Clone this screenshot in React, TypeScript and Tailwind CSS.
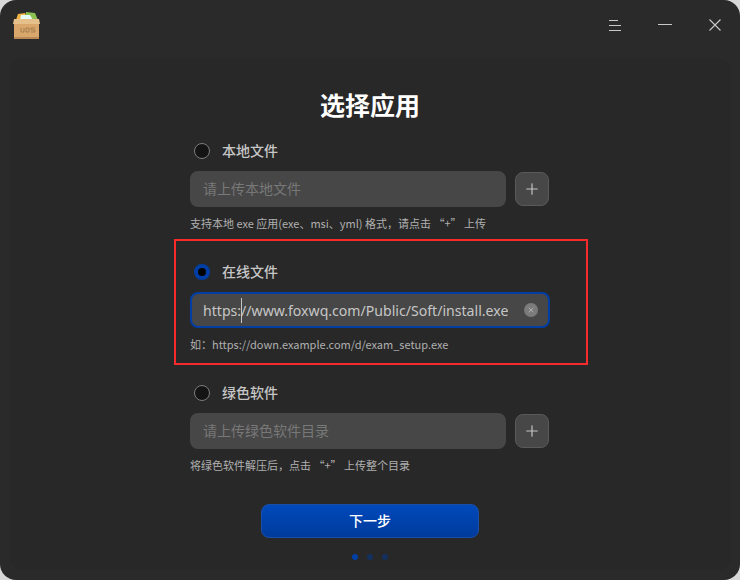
import { X, Plus } from "lucide-react";

const font = "font-['Noto_Sans','Noto_Sans_CJK_SC',sans-serif]";

function Radio({ checked }: { checked?: boolean }) {
  if (checked) {
    return <span className="w-4 h-4 rounded-full border-[4px] border-[#003ea6] bg-black" />;
  }
  return <span className="w-4 h-4 rounded-full border border-[#7d7d7d] bg-[#141414]" />;
}

function Option({ label, checked }: { label: string; checked?: boolean }) {
  return (
    <div className="flex items-center gap-3 pl-1 h-5 text-sm text-[#c6c6c6] font-medium leading-5">
      <Radio checked={checked} />
      <span>{label}</span>
    </div>
  );
}

function UploadField({ placeholder }: { placeholder: string }) {
  return (
    <div className="flex items-center gap-[9px] h-9">
      <div className="w-[316px] h-9 rounded-lg bg-[#474747] pl-[13px] flex items-center text-sm text-[#787878]">
        {placeholder}
      </div>
      <button className="w-[34px] h-[34px] rounded-lg bg-[#474747] border border-[#5a5a5a] flex items-center justify-center text-[#c4c4c4]">
        <Plus size={18} strokeWidth={1.6} />
      </button>
    </div>
  );
}

function Hint({ children }: { children: string }) {
  return (
    <p className="text-[11px] leading-4 font-normal text-[#b0b0b0] font-['Noto_Sans_CJK_SC','Noto_Sans',sans-serif]">
      {children}
    </p>
  );
}

function AppIcon() {
  return (
    <svg width="30" height="28" viewBox="0 0 30 28">
      <path d="M5 9 L7 3 L14 2 L17 9Z" fill="#f2b544" />
      <path d="M14 8 L15 1 L24 2 L27 9Z" fill="#8cc152" />
      <path d="M9 9 L10 4 L19 4 L22 9Z" fill="#e6fbf6" />
      <path d="M3 8 H28 L29 13 H2Z" fill="#e6c08a" />
      <path d="M3 13 H28 V26 Q28 28 26 28 H5 Q3 28 3 26Z" fill="#d9a76c" />
      <rect x="3" y="26" width="25" height="2" fill="#b98a55" />
      <path d="M10 17 V21 H13 V17 M15 17 V21 H18 V17 H15 M24 17 H20 V19 H24 V21 H20" fill="none" stroke="#a17a4d" strokeWidth="0.9" />
    </svg>
  );
}

export default function App() {
  return (
    <div className={`w-[740px] h-[580px] bg-[#d8d8d8] ${font}`}>
      <div className="relative w-full h-full rounded-[16px] overflow-hidden bg-[#2a2a2a] flex flex-col">
        <header className="h-[58px] shrink-0 flex items-start justify-between pl-[11px] pr-[19px]">
          <div className="pt-[11px]">
            <AppIcon />
          </div>
          <div className="flex items-center gap-[37px] pt-[19px] text-[#c8c8c8]">
            <div className="flex flex-col gap-[4px] w-3">
              <span className="h-px w-[9px] bg-[#c8c8c8]" />
              <span className="h-px w-3 bg-[#c8c8c8]" />
              <span className="h-px w-3 bg-[#c8c8c8]" />
            </div>
            <span className="h-px w-[14px] bg-[#c8c8c8] -mt-[2px]" />
            <svg width="12" height="12" viewBox="0 0 12 12" fill="none" stroke="#c8c8c8" strokeWidth="1.1">
              <path d="M0.5 0.5 L11.5 11.5 M11.5 0.5 L0.5 11.5" />
            </svg>
          </div>
        </header>

        <main className="flex-1 mx-[9px] mb-[10px] rounded-[14px] bg-[#282828] flex flex-col items-center">
          <h1 className="mt-[29px] h-9 text-[25px] leading-9 font-bold text-white">选择应用</h1>

          <div className="w-[360px] flex flex-col mt-[18px]">
            <Option label="本地文件" />
            <div className="mt-[10px]">
              <UploadField placeholder="请上传本地文件" />
            </div>
            <div className="mt-[8px]">
              <Hint>支持本地 exe 应用(exe、msi、yml) 格式，请点击 “+” 上传</Hint>
            </div>

            <div className="mt-[31px]">
              <Option label="在线文件" checked />
            </div>
            <div className="mt-[10px] w-[360px] h-9 rounded-lg border-2 border-[#003ea6] bg-[#474747] pl-[11px] pr-[10px] flex items-center">
              <span className="relative w-[305px] overflow-hidden whitespace-nowrap text-[14.1px] leading-6 pt-px text-[#c6c6c6]">
                https://www.foxwq.com/Public/Soft/install.exe
                <span className="absolute left-[38px] top-0 h-full w-px bg-[#c6c6c6]" />
              </span>
              <span className="ml-auto w-[14px] h-[14px] rounded-full bg-[#7b7b7b] flex items-center justify-center text-[#dddddd]">
                <X size={8} strokeWidth={1.6} />
              </span>
            </div>
            <div className="mt-[8px]">
              <Hint>如：https://down.example.com/d/exam_setup.exe</Hint>
            </div>

            <div className="mt-[31px]">
              <Option label="绿色软件" />
            </div>
            <div className="mt-[10px]">
              <UploadField placeholder="请上传绿色软件目录" />
            </div>
            <div className="mt-[8px]">
              <Hint>将绿色软件解压后，点击 “+” 上传整个目录</Hint>
            </div>
          </div>

          <button className="mt-[31px] w-[218px] h-[34px] rounded-lg border border-[#1a4fa8] bg-gradient-to-b from-[#0049bb] to-[#003b9c] text-sm font-medium text-white">
            下一步
          </button>

          <div className="mt-[16px] flex gap-[9px]">
            <span className="w-[6px] h-[6px] rounded-full bg-[#0040a6]" />
            <span className="w-[6px] h-[6px] rounded-full bg-[#14305f]" />
            <span className="w-[6px] h-[6px] rounded-full bg-[#14305f]" />
          </div>
        </main>

        {/* annotation box drawn over the screenshot */}
        <div className="absolute left-[174px] top-[239px] w-[414px] h-[126px] border-2 border-[#f72b2b]" />
      </div>
    </div>
  );
}
